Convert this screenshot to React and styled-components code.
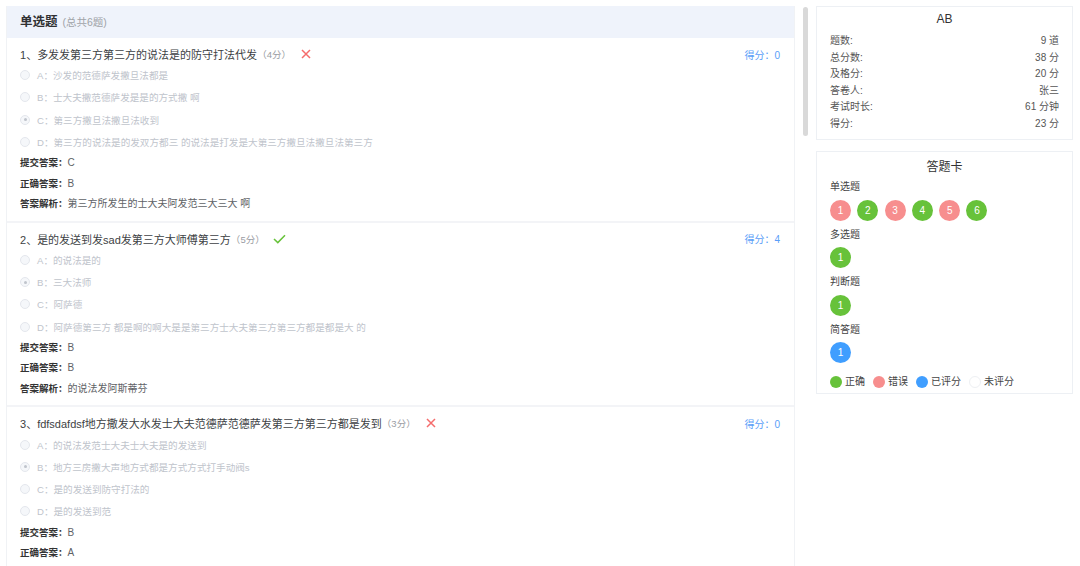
import React from "react";
import styled, { createGlobalStyle } from "styled-components";

const GlobalStyle = createGlobalStyle`
  html, body {
    margin: 0;
    padding: 0;
    background: #fff;
    overflow: hidden;
  }
  body {
    font-family: "Liberation Sans", "Noto Sans CJK SC", sans-serif;
    color: #303133;
  }
`;

const StyledPage = styled.div`
  display: flex;
  align-items: flex-start;
  height: 566px;
  padding: 6px 0 0 6px;
  box-sizing: border-box;
  overflow: hidden;
`;

const StyledMain = styled.div`
  width: 789px;
  flex-shrink: 0;
  border: 1px solid #f0f2f5;
  border-top: none;
  box-sizing: border-box;
`;

const StyledHeader = styled.div`
  display: flex;
  align-items: baseline;
  height: 32px;
  line-height: 32px;
  padding-left: 13px;
  background: #eff3fb;
`;

const StyledHeaderTitle = styled.span`
  font-size: 12.5px;
  font-weight: bold;
  color: #303133;
`;

const StyledHeaderCount = styled.span`
  margin-left: 5px;
  font-size: 10.5px;
  color: #a0a3a8;
`;

const StyledQuestion = styled.div`
  padding: 6px 14px 6px 13px;
  border-top: ${props => (props.first ? "none" : "2px solid #f3f4f7")};
`;

const StyledTitleRow = styled.div`
  display: flex;
  align-items: center;
  height: 20px;
`;

const StyledTitle = styled.span`
  font-size: 11px;
  color: #3d3f44;
`;

const StyledPoints = styled.span`
  font-size: 9.5px;
  color: #9a9da3;
`;

const StyledMark = styled.span`
  display: inline-flex;
  align-items: center;
  margin-left: ${props => props.gap}px;
`;

const StyledScore = styled.span`
  margin-left: auto;
  font-size: 10px;
  color: #5a9ef8;
`;

const StyledOption = styled.div`
  display: flex;
  align-items: center;
  height: 22.3px;
  font-size: 9.6px;
  color: #c0c4cc;
`;

const StyledRadio = styled.span`
  display: inline-flex;
  align-items: center;
  justify-content: center;
  width: 10px;
  height: 10px;
  margin-right: 7px;
  border: 1px solid #e4e7ed;
  border-radius: 50%;
  background: #f5f7fa;
  box-sizing: border-box;
  &::after {
    content: "";
    width: 3px;
    height: 3px;
    border-radius: 50%;
    background: ${props => (props.checked ? "#c0c4cc" : "transparent")};
  }
`;

const StyledAnswer = styled.div`
  height: 20.5px;
  line-height: 20.5px;
  font-size: 10px;
  color: #606266;
`;

const StyledAnswerLabel = styled.span`
  font-size: 9.5px;
  font-weight: bold;
  color: #333;
`;

const StyledScrollbar = styled.div`
  width: 5px;
  height: 129px;
  margin: 1px 0 0 8px;
  border-radius: 3px;
  background: #d9d9d9;
  flex-shrink: 0;
`;

const StyledSide = styled.div`
  display: flex;
  flex-direction: column;
  gap: 11px;
  width: 257px;
  margin-left: 8px;
  flex-shrink: 0;
`;

const StyledCard = styled.div`
  border: 1px solid #edf0f4;
  padding: ${props => props.pad};
  box-sizing: border-box;
`;

const StyledCardTitle = styled.div`
  text-align: center;
  font-size: 12px;
  color: #333;
  line-height: ${props => props.lh}px;
`;

const StyledInfoList = styled.div`
  margin-top: 5px;
`;

const StyledInfoRow = styled.div`
  display: flex;
  justify-content: space-between;
  height: 16.5px;
  line-height: 16.5px;
  font-size: 10px;
  color: #555;
`;

const StyledGroupLabel = styled.div`
  font-size: 10px;
  line-height: 16px;
  color: #444;
`;

const StyledCircleRow = styled.div`
  display: flex;
  gap: 6.3px;
  margin: 4.5px 0 6px;
`;

const colors = {
  right: "#67c23a",
  wrong: "#f78e8e",
  marked: "#409eff",
  none: "#fff"
};

const StyledCircle = styled.span`
  display: inline-flex;
  align-items: center;
  justify-content: center;
  width: 21px;
  height: 21px;
  border-radius: 50%;
  background: ${props => colors[props.status]};
  color: #fff;
  font-size: 10px;
`;

const StyledLegend = styled.div`
  display: flex;
  align-items: center;
  margin-top: 12px;
  line-height: 14px;
  font-size: 10px;
  color: #444;
`;

const StyledLegendItem = styled.span`
  display: inline-flex;
  align-items: center;
  margin-right: 8px;
`;

const StyledDot = styled.span`
  width: 12px;
  height: 12px;
  margin-right: 3px;
  border-radius: 50%;
  background: ${props => colors[props.status]};
  border: ${props => (props.status === "none" ? "1px solid #eef0f3" : "none")};
  box-sizing: border-box;
`;

const CrossIcon = () => (
  <svg width="10" height="10" viewBox="0 0 10 10">
    <path d="M1 1 L9 9 M9 1 L1 9" stroke="#f56c6c" strokeWidth="1.5" fill="none" />
  </svg>
);

const CheckIcon = () => (
  <svg width="13" height="10" viewBox="0 0 13 10">
    <path d="M1 5 L4.8 8.6 L12 1.2" stroke="#67c23a" strokeWidth="1.5" fill="none" />
  </svg>
);

const questions = [
  {
    no: 1,
    title: "多发发第三方第三方的说法是的防守打法代发",
    points: 4,
    correct: false,
    score: 0,
    options: [
      "A：沙发的范德萨发撒旦法都是",
      "B：士大夫撒范德萨发是是的方式撒 啊",
      "C：第三方撒旦法撒旦法收到",
      "D：第三方的说法是的发双方都三 的说法是打发是大第三方撒旦法撒旦法第三方"
    ],
    checked: 2,
    submitted: "C",
    answer: "B",
    analysis: "第三方所发生的士大夫阿发范三大三大 啊"
  },
  {
    no: 2,
    title: "是的发送到发sad发第三方大师傅第三方",
    points: 5,
    correct: true,
    score: 4,
    options: [
      "A：的说法是的",
      "B：三大法师",
      "C：阿萨德",
      "D：阿萨德第三方 都是啊的啊大是是第三方士大夫第三方第三方都是都是大 的"
    ],
    checked: 1,
    submitted: "B",
    answer: "B",
    analysis: "的说法发阿斯蒂芬"
  },
  {
    no: 3,
    title: "fdfsdafdsf地方撒发大水发士大夫范德萨范德萨发第三方第三方都是发到",
    points: 3,
    correct: false,
    score: 0,
    options: [
      "A：的说法发范士大夫士大夫是的发送到",
      "B：地方三房撒大声地方式都是方式方式打手动阀s",
      "C：是的发送到防守打法的",
      "D：是的发送到范"
    ],
    checked: 1,
    submitted: "B",
    answer: "A",
    analysis: "的说法是的发送到"
  }
];

const info = [
  ["题数:", "9 道"],
  ["总分数:", "38 分"],
  ["及格分:", "20 分"],
  ["答卷人:", "张三"],
  ["考试时长:", "61 分钟"],
  ["得分:", "23 分"]
];

const card = [
  { name: "单选题", items: ["wrong", "right", "wrong", "right", "wrong", "right"] },
  { name: "多选题", items: ["right"] },
  { name: "判断题", items: ["right"] },
  { name: "简答题", items: ["marked"] }
];

const legend = [
  ["right", "正确"],
  ["wrong", "错误"],
  ["marked", "已评分"],
  ["none", "未评分"]
];

const Question = ({ q, first }) => (
  <StyledQuestion first={first}>
    <StyledTitleRow>
      <StyledTitle>
        {q.no}、{q.title}
      </StyledTitle>
      <StyledPoints>（{q.points}分）</StyledPoints>
      <StyledMark gap={q.correct ? 8 : 10}>
        {q.correct ? <CheckIcon /> : <CrossIcon />}
      </StyledMark>
      <StyledScore>得分：{q.score}</StyledScore>
    </StyledTitleRow>
    {q.options.map((opt, i) => (
      <StyledOption key={i}>
        <StyledRadio checked={i === q.checked} />
        {opt}
      </StyledOption>
    ))}
    <StyledAnswer>
      <StyledAnswerLabel>提交答案：</StyledAnswerLabel>
      {q.submitted}
    </StyledAnswer>
    <StyledAnswer>
      <StyledAnswerLabel>正确答案：</StyledAnswerLabel>
      {q.answer}
    </StyledAnswer>
    <StyledAnswer>
      <StyledAnswerLabel>答案解析：</StyledAnswerLabel>
      {q.analysis}
    </StyledAnswer>
  </StyledQuestion>
);

export default function App() {
  return (
    <>
      <GlobalStyle />
      <StyledPage>
        <StyledMain>
          <StyledHeader>
            <StyledHeaderTitle>单选题</StyledHeaderTitle>
            <StyledHeaderCount>(总共6题)</StyledHeaderCount>
          </StyledHeader>
          {questions.map((q, i) => (
            <Question key={q.no} q={q} first={i === 0} />
          ))}
        </StyledMain>
        <StyledScrollbar />
        <StyledSide>
          <StyledCard pad="3px 13px 7px">
            <StyledCardTitle lh={18}>AB</StyledCardTitle>
            <StyledInfoList>
              {info.map(([k, v]) => (
                <StyledInfoRow key={k}>
                  <span>{k}</span>
                  <span>{v}</span>
                </StyledInfoRow>
              ))}
            </StyledInfoList>
          </StyledCard>
          <StyledCard pad="6px 13px 4px">
            <StyledCardTitle lh={18}>答题卡</StyledCardTitle>
            <div style={{ height: 3 }} />
            {card.map(g => (
              <div key={g.name}>
                <StyledGroupLabel>{g.name}</StyledGroupLabel>
                <StyledCircleRow>
                  {g.items.map((s, i) => (
                    <StyledCircle key={i} status={s}>
                      {i + 1}
                    </StyledCircle>
                  ))}
                </StyledCircleRow>
              </div>
            ))}
            <StyledLegend>
              {legend.map(([s, t]) => (
                <StyledLegendItem key={s}>
                  <StyledDot status={s} />
                  {t}
                </StyledLegendItem>
              ))}
            </StyledLegend>
          </StyledCard>
        </StyledSide>
      </StyledPage>
    </>
  );
}
